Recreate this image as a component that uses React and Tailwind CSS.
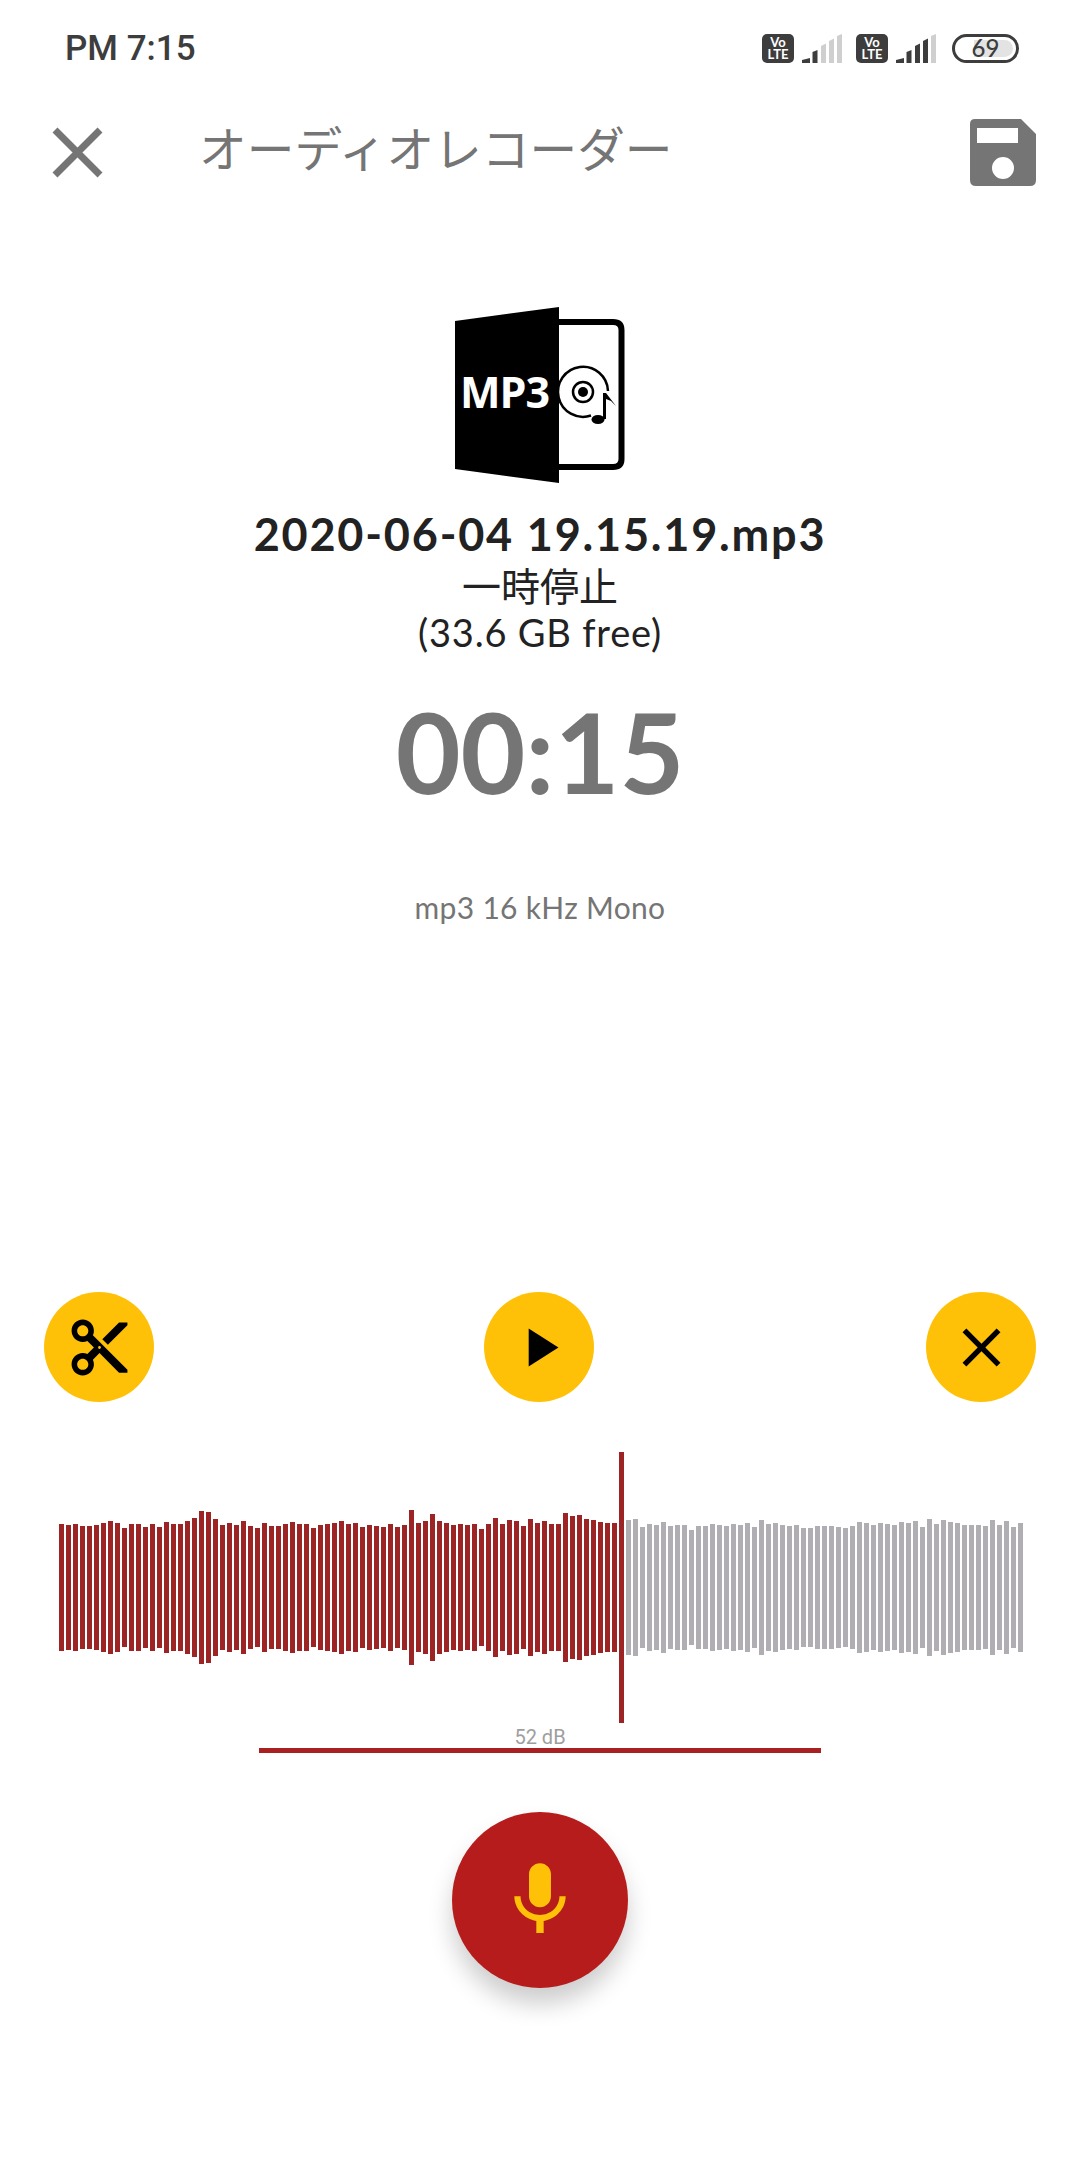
import React from 'react';

const latin = "font-['Lato','Noto_Sans_CJK_JP',sans-serif]";

const tops = [
    252, 255, 252, 258, 258, 255, 249, 243, 249, 264, 252, 252, 261, 252, 261, 246, 252, 252, 243, 234, 213, 216, 237,
    255, 249, 255, 243, 258, 264, 249, 258, 258, 252, 246, 252, 252, 264, 255, 252, 249, 243, 252, 249, 261, 255, 258,
    261, 252, 261, 255, 210, 249, 243, 222, 243, 249, 255, 252, 255, 252, 267, 252, 234, 252, 240, 243, 258, 237, 249,
    243, 252, 252, 219, 228, 225, 237, 240, 246, 249, 249, 237,
    240, 237, 261, 252, 255, 246, 258, 255, 255, 270, 258, 258, 252, 255, 258, 252, 255, 249, 261, 240, 252, 249, 255,
    258, 255, 264, 264, 258, 258, 258, 261, 264, 258, 246, 249, 255, 249, 252, 255, 246, 249, 243, 261, 237, 252, 240,
    246, 249, 255, 255, 255, 258, 240, 255, 243, 261, 249,
];
const PLAYED = 81;

const Signal = ({ level }) => (
    <svg width="40" height="29" viewBox="0 0 40 29">
        {[
            'M0 29V26L8 24V29Z',
            'M10.5 29V18L15.5 16V29Z',
            'M19 29V12L24 9.5V29Z',
            'M27 29V7L32 4.5V29Z',
            'M35 29V2L40 0V29Z',
        ].map((d, i) => (
            <path key={i} d={d} fill={i < level ? '#3d3d3d' : '#cfcfcf'} />
        ))}
    </svg>
);

const VoLte = () => (
    <div className="w-[32px] h-[29px] rounded-[5px] bg-[#3d3d3d] text-white flex flex-col items-center justify-center font-['Lato',sans-serif] font-bold text-[13px] leading-[12.5px]">
        <span>Vo</span>
        <span>LTE</span>
    </div>
);

const Mp3Icon = () => (
    <svg width="172" height="180" viewBox="455 305 172 180">
        <path d="M560 322H614Q622.500 322 622.500 330V459Q622.500 467 614 467H560" fill="none" stroke="#000" strokeWidth="6" />
        <path d="M456 321L560 307V483L456 469Z" fill="#000" />
        <text x="461" y="408" fill="#fff" fontFamily="Open Sans" fontWeight="700" fontSize="43" letterSpacing="-1">MP3</text>
        <path d="M592 415.500A25 25 0 1 1 609 391" fill="none" stroke="#000" strokeWidth="2.500" />
        <circle cx="584" cy="392" r="10" fill="none" stroke="#000" strokeWidth="2.500" />
        <circle cx="584" cy="392" r="5" fill="#000" />
        <path d="M604 393L607 393L617 406L612 401L607 399V419L604 419Z" fill="#000" />
        <ellipse cx="599" cy="419.500" rx="6.500" ry="4.500" fill="#000" />
    </svg>
);

const YellowButton = ({ path, size = 65, className = '' }) => (
    <button className={`w-[110px] h-[110px] rounded-full bg-[#ffc107] flex items-center justify-center ${className}`}>
        <svg width={size} height={size} viewBox="0 0 24 24" fill="#000">
            <path d={path} />
        </svg>
    </button>
);

const App = () => {
    return (
        <div className="relative w-[1080px] h-[2160px] bg-white flex flex-col overflow-hidden">
            {/* Status bar */}
            <div className="h-[96px] flex items-center justify-between pl-[65px] pr-[61px]">
                <span className="mt-[2px] font-['Roboto',sans-serif] font-medium text-[35px] text-[#3d3d3d]">PM 7:15</span>
                <div className="flex items-center">
                    <VoLte />
                    <div className="ml-[8px]"><Signal level={2} /></div>
                    <div className="ml-[14px]"><VoLte /></div>
                    <div className="ml-[8px]"><Signal level={4} /></div>
                    <div className="ml-[16px] w-[67px] h-[29px] rounded-full border-[3px] border-[#3d3d3d] p-[3px] pl-[19px] relative">
                        <div className="h-full rounded-r-full bg-[#e3e3e3]" />
                        <span className="absolute inset-0 flex items-center justify-center font-['Lato',sans-serif] font-medium text-[24px] text-[#3d3d3d]">69</span>
                    </div>
                </div>
            </div>

            {/* Header */}
            <div className="h-[108px] flex items-center pl-[51px] pr-[44px]">
                <svg width="53" height="53" viewBox="0 0 53 53" className="mt-[4px]">
                    <path d="M4 4L49 49M49 4L4 49" stroke="#757575" strokeWidth="7" />
                </svg>
                <span className="ml-[95px] mb-[6px] flex-1 font-['Noto_Sans_CJK_JP',sans-serif] text-[47.700px] leading-none text-[#757575]">オーディオレコーダー</span>
                <svg width="66" height="67" viewBox="0 0 66 67" className="mt-[5px]">
                    <path
                        fillRule="evenodd"
                        fill="#757575"
                        d="M5 0H51L66 15V61Q66 67 60 67H6Q0 67 0 61V5Q0 0 5 0ZM7 9V24H48V9ZM33 38A11 11 0 1 0 33 60A11 11 0 1 0 33 38Z"
                    />
                </svg>
            </div>

            {/* File info */}
            <div className="flex flex-col items-center">
                <div className="mt-[101px]"><Mp3Icon /></div>
                <div className={`mt-[19px] ${latin} font-bold text-[45px] tracking-[1.8px] leading-[60px] text-[#222222]`}>2020-06-04 19.15.19.mp3</div>
                <div className="mt-[-5px] font-['Noto_Sans_CJK_JP',sans-serif] text-[39px] leading-[50px] text-[#222222]">一時停止</div>
                <div className={`${latin} text-[38px] tracking-[0.8px] leading-[46px] text-[#222222]`}>(33.6 GB free)</div>
                <div className={`mt-[31px] ${latin} font-bold text-[112px] leading-[130px] text-[#757575]`}>00:15</div>
                <div className={`mt-[71px] ${latin} font-normal text-[30px] tracking-[0.3px] leading-[40px] text-[#757575]`}>mp3 16 kHz Mono</div>
            </div>

            {/* Controls */}
            <div className="mt-[365px] flex items-center justify-between pl-[44px] pr-[44px]">
                <YellowButton
                    size={67}
                    path="M9.64 7.64c.23-.5.36-1.05.36-1.64 0-2.21-1.79-4-4-4S2 3.79 2 6s1.79 4 4 4c.59 0 1.14-.13 1.64-.36L10 12l-2.36 2.36C7.14 14.13 6.59 14 6 14c-2.21 0-4 1.79-4 4s1.79 4 4 4 4-1.79 4-4c0-.59-.13-1.14-.36-1.64L12 14l7 7h3v-1L9.64 7.64zM6 8c-1.1 0-2-.89-2-2s.9-2 2-2 2 .89 2 2-.9 2-2 2zm0 12c-1.1 0-2-.89-2-2s.9-2 2-2 2 .89 2 2-.9 2-2 2zm6-7.5c-.28 0-.5-.22-.5-.5s.22-.5.5-.5.5.22.5.5-.22.5-.5.5zM19 3l-6 6 2 2 7-7V3z"
                />
                <YellowButton className="mr-[2px]" path="M8 5v14l11-7z" />
                <YellowButton path="M19 6.41L17.590 5 12 10.590 6.410 5 5 6.410 10.590 12 5 17.590 6.410 19 12 13.410 17.590 19 19 17.590 13.410 12z" />
            </div>

            {/* Wave */}
            <div className="relative mt-[50px] h-[271px] pl-[59px] flex items-center gap-[2px]">
                {tops.map((top, i) => (
                    <div
                        key={i}
                        className={`w-[5px] shrink-0 ${i < PLAYED ? 'bg-[#9c2424]' : 'bg-[#b0aeb2]'}`}
                        style={{ height: Math.round(((442 - top) * 2) / 3) }}
                    />
                ))}
                <div className="absolute left-[619px] top-0 bottom-0 w-[5px] bg-[#9c2424]" />
            </div>

            {/* Level */}
            <div className="mt-[4px] flex flex-col items-center">
                <span className="font-['Roboto',sans-serif] text-[20px] leading-[21px] text-[#9e9e9e]">52 dB</span>
                <div className="w-[562px] h-[5px] bg-[#a82020]" />
            </div>

            {/* Record */}
            <div className="mt-[59px] flex justify-center">
                <button className="w-[176px] h-[176px] rounded-full bg-[#b71c1c] flex items-center justify-center shadow-[0_16px_24px_rgba(0,0,0,0.2)]">
                    <svg width="88" height="88" viewBox="0 0 24 24" fill="#ffc107">
                        <path d="M12 14c1.66 0 2.99-1.34 2.99-3L15 5c0-1.66-1.34-3-3-3S9 3.34 9 5v6c0 1.66 1.34 3 3 3zm5.3-3c0 3-2.54 5.100-5.300 5.100S6.700 14 6.700 11H5c0 3.410 2.720 6.230 6 6.720V21h2v-3.280c3.280-.48 6-3.300 6-6.720h-1.700z" />
                    </svg>
                </button>
            </div>
        </div>
    );
};

export default App;
